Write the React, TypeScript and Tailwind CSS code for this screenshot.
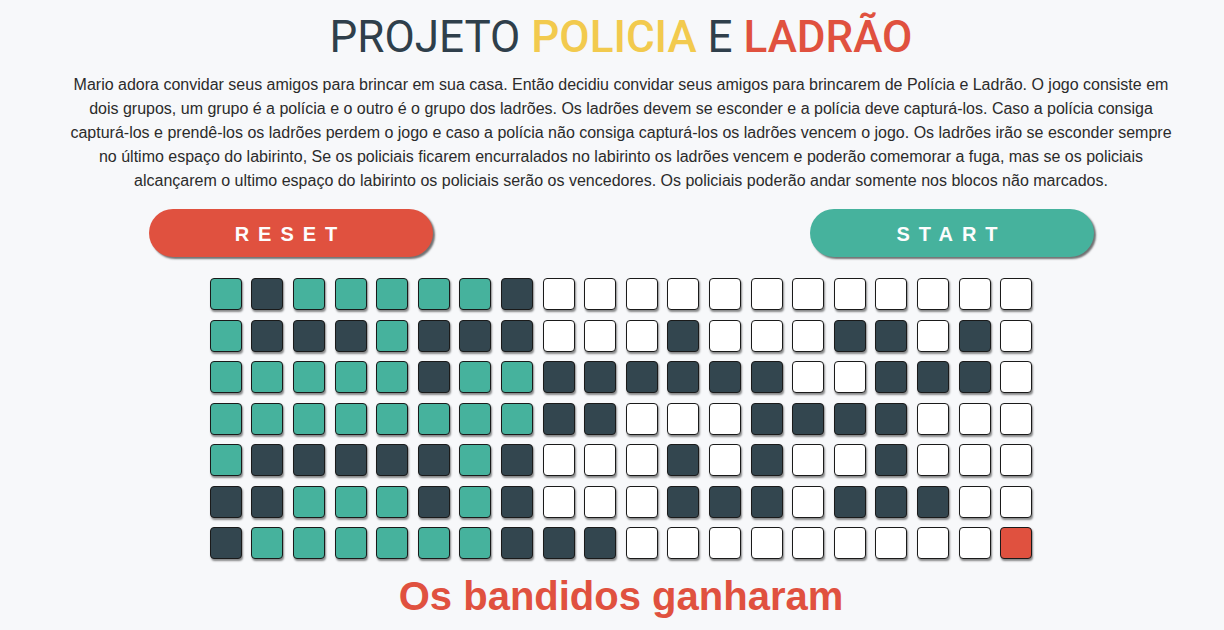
const GRID = [
  "TDTTTTTDWWWWWWWWWWWW",
  "TDDDTDDDWWWDWWWDDWDW",
  "TTTTTDTTDDDDDDWWDDDW",
  "TTTTTTTTDDWWWDDDDWWW",
  "TDDDDDTDWWWDWDWWDWWW",
  "DDTTTDTDWWWDDDWDDDWW",
  "DTTTTTTDDDWWWWWWWWWR",
];

const cellColor: Record<string, string> = {
  T: "bg-[#46b29d]",
  D: "bg-[#33464f]",
  W: "bg-white",
  R: "bg-[#e0513f]",
};

const App = () => {
  return (
    <div className="min-h-screen bg-[#f7f8fa] pl-[18px] flex flex-col items-center font-['Liberation_Sans',Arial,sans-serif]">
      <h1 className="mt-[10px] text-[44px] leading-[54px] text-[#2f3f4b] font-['Roboto',sans-serif]">
        PROJETO <span className="font-medium text-[#f2ca4e]">POLICIA</span> E{" "}
        <span className="font-medium text-[#e0513f]">LADRÃO</span>
      </h1>
      <p className="mt-[9px] w-[1110px] text-center text-base leading-6 text-[#2b2b2b]">
        Mario adora convidar seus amigos para brincar em sua casa. Então decidiu convidar seus amigos para brincarem de Polícia e Ladrão. O jogo consiste em dois grupos, um grupo é a polícia e o outro é o grupo dos ladrões. Os ladrões devem se esconder e a polícia deve capturá-los. Caso a polícia consiga capturá-los e prendê-los os ladrões perdem o jogo e caso a polícia não consiga capturá-los os ladrões vencem o jogo. Os ladrões irão se esconder sempre no último espaço do labirinto, Se os policiais ficarem encurralados no labirinto os ladrões vencem e poderão comemorar a fuga, mas se os policiais alcançarem o ultimo espaço do labirinto os policiais serão os vencedores. Os policiais poderão andar somente nos blocos não marcados.
      </p>
      <div className="mt-[16px] w-[945px] flex justify-between">
        <button className="w-[284px] h-12 pt-[2px] rounded-full bg-[#e0513f] text-[#fdfdfd] text-[20px] font-bold tracking-[0.45em] shadow-[2px_2px_2px_rgba(0,0,0,0.55)]">
          RESET
        </button>
        <button className="w-[284px] h-12 pt-[2px] rounded-full bg-[#46b29d] text-[#fdfdfd] text-[20px] font-bold tracking-[0.45em] shadow-[2px_2px_2px_rgba(0,0,0,0.55)]">
          START
        </button>
      </div>
      <div className="mt-[21px] grid grid-cols-[repeat(20,32px)] gap-x-[9.6px] gap-y-[9.5px]">
        {GRID.map((row, r) =>
          row.split("").map((c, i) => (
            <div
              key={`${r}-${i}`}
              className={`w-8 h-8 rounded-[4px] border border-[#1a1a1a] shadow-[1px_2px_2px_rgba(0,0,0,0.45)] ${cellColor[c]}`}
            />
          ))
        )}
      </div>
      <h2 className="mt-[14px] text-[40px] leading-[46px] font-bold text-[#e0513f]">Os bandidos ganharam</h2>
    </div>
  );
};

export default App;
